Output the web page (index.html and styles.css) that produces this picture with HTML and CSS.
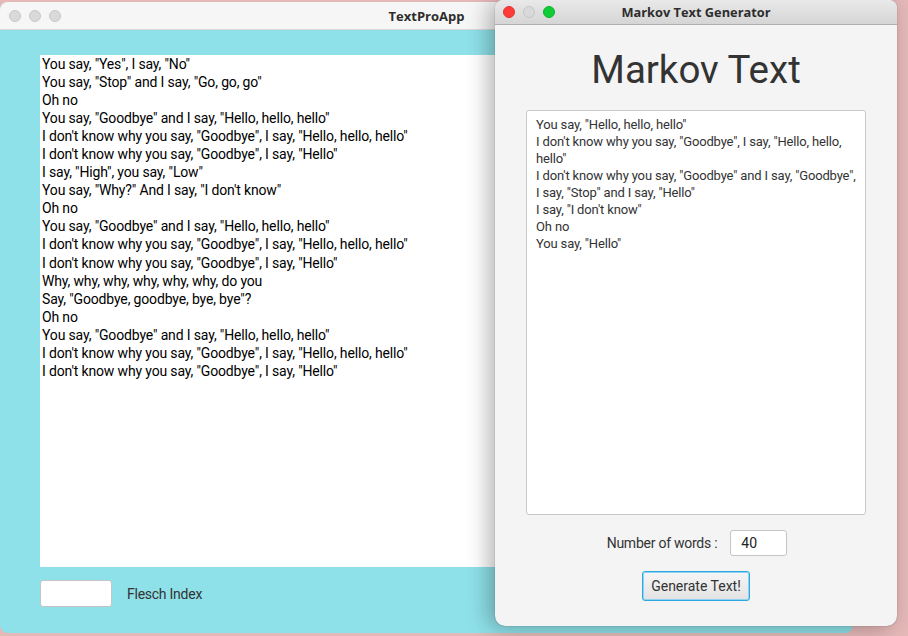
FILE: index.html
```html
<!DOCTYPE html>
<html>
<head>
<meta charset="utf-8">
<link rel="stylesheet" href="styles.css">
</head>
<body>
<div class="desktop">
  <div class="win win-main">
    <div class="titlebar titlebar-inactive">
      <div class="lights">
        <span class="light grey"></span><span class="light grey"></span><span class="light grey"></span>
      </div>
      <div class="title">TextProApp</div>
    </div>
    <div class="main-body">
      <div class="doc">
        <div>You say, "Yes", I say, "No"</div>
        <div>You say, "Stop" and I say, "Go, go, go"</div>
        <div>Oh no</div>
        <div>You say, "Goodbye" and I say, "Hello, hello, hello"</div>
        <div>I don't know why you say, "Goodbye", I say, "Hello, hello, hello"</div>
        <div>I don't know why you say, "Goodbye", I say, "Hello"</div>
        <div>I say, "High", you say, "Low"</div>
        <div>You say, "Why?" And I say, "I don't know"</div>
        <div>Oh no</div>
        <div>You say, "Goodbye" and I say, "Hello, hello, hello"</div>
        <div>I don't know why you say, "Goodbye", I say, "Hello, hello, hello"</div>
        <div>I don't know why you say, "Goodbye", I say, "Hello"</div>
        <div>Why, why, why, why, why, why, do you</div>
        <div>Say, "Goodbye, goodbye, bye, bye"?</div>
        <div>Oh no</div>
        <div>You say, "Goodbye" and I say, "Hello, hello, hello"</div>
        <div>I don't know why you say, "Goodbye", I say, "Hello, hello, hello"</div>
        <div>I don't know why you say, "Goodbye", I say, "Hello"</div>
      </div>
      <div class="bottom-row">
        <div class="field field-flesch"></div>
        <span class="label">Flesch Index</span>
      </div>
    </div>
  </div>

  <div class="win win-markov">
    <div class="titlebar titlebar-active">
      <div class="lights">
        <span class="light red"></span><span class="light grey"></span><span class="light green"></span>
      </div>
      <div class="title">Markov Text Generator</div>
    </div>
    <div class="markov-body">
      <h1 class="heading">Markov Text</h1>
      <div class="gen-text">
        <div>You say, "Hello, hello, hello"</div>
        <div>I don't know why you say, "Goodbye", I say, "Hello, hello, hello"</div>
        <div>I don't know why you say, "Goodbye" and I say, "Goodbye", I say, "Stop" and I say, "Hello"</div>
        <div>I say, "I don't know"</div>
        <div>Oh no</div>
        <div>You say, "Hello"</div>
      </div>
      <div class="words-row">
        <span class="label">Number of words :</span>
        <div class="field field-words">40</div>
      </div>
      <button class="btn">Generate Text!</button>
    </div>
  </div>
</div>
</body>
</html>
```
FILE: styles.css
```css
html, body {
  margin: 0;
  padding: 0;
}
body {
  width: 908px;
  height: 636px;
  overflow: hidden;
  background: #e6b9b9;
  font-family: "Roboto", "Liberation Sans", sans-serif;
}
.desktop {
  position: relative;
  width: 908px;
  height: 636px;
}
.win {
  position: absolute;
  overflow: hidden;
  display: flex;
  flex-direction: column;
}
.win-main {
  left: 0;
  top: 2px;
  width: 853px;
  height: 631px;
  border-radius: 8px;
  background: #8fe1e9;
}
.win-markov {
  left: 495px;
  top: 0;
  width: 402px;
  height: 626px;
  border-radius: 8px 8px 10px 10px;
  background: #f4f4f4;
  box-shadow: 0 0 1px rgba(0,0,0,0.5), -6px 2px 22px rgba(0,0,0,0.3);
}
.titlebar {
  position: relative;
  flex: none;
  display: flex;
  align-items: center;
  justify-content: center;
}
.titlebar-inactive {
  height: 27px;
  background: #f6f6f6;
  border-bottom: 1px solid #d8d8d8;
}
.titlebar-active {
  height: 24px;
  background: linear-gradient(#e9e9e9, #d5d5d5);
  border-bottom: 1px solid #aeaeae;
}
.lights {
  position: absolute;
  left: 8px;
  top: 0;
  bottom: 0;
  display: flex;
  align-items: center;
  gap: 8px;
}
.titlebar-inactive .lights {
  left: 9px;
}
.light {
  width: 12px;
  height: 12px;
  border-radius: 50%;
  box-sizing: border-box;
}
.light.grey {
  background: #d9d9d9;
  border: 1px solid #c6c6c6;
}
.light.red {
  background: #fe3b3b;
  border: 1px solid #e2302f;
}
.light.green {
  background: #10cc36;
  border: 1px solid #0fb02c;
}
.title {
  font-family: "Open Sans", "Liberation Sans", sans-serif;
  font-weight: 700;
  font-size: 13px;
  color: #2d2d2d;
}
.titlebar-active .title {
  font-size: 12.8px;
}
.main-body {
  flex: 1;
  display: flex;
  flex-direction: column;
  padding: 25px 40px 0 40px;
}
.doc {
  height: 512px;
  background: #fff;
  padding: 0 2px;
  font-size: 14px;
  line-height: 18.05px;
  color: #000;
  letter-spacing: -0.15px;
}
.bottom-row {
  display: flex;
  align-items: center;
  gap: 15px;
  margin-top: 13px;
}
.field {
  box-sizing: border-box;
  background: #fff;
  border: 1px solid #c4c4c4;
  border-radius: 3px;
  height: 27px;
}
.field-flesch {
  width: 72px;
}
.label {
  font-size: 14px;
  color: #333;
  letter-spacing: -0.25px;
}
.markov-body {
  flex: 1;
  display: flex;
  flex-direction: column;
  align-items: center;
}
.heading {
  margin: 21px 0 0 0;
  font-weight: 400;
  font-size: 38.5px;
  line-height: 48px;
  color: #333;
}
.gen-text {
  box-sizing: border-box;
  margin-top: 16px;
  width: 340px;
  height: 405px;
  background: #fff;
  border: 1px solid #c8c8c8;
  border-radius: 3px;
  padding: 5px 9px;
  font-size: 13px;
  line-height: 17px;
  color: #333;
  letter-spacing: -0.15px;
}
.words-row {
  display: flex;
  align-items: center;
  gap: 13px;
  margin-top: 15px;
  padding-left: 2px;
}
.field-words {
  width: 57px;
  height: 26px;
  padding: 0 10px;
  font-size: 14px;
  line-height: 24px;
  color: #222;
}
.btn {
  margin-top: 15px;
  box-sizing: border-box;
  width: 108px;
  height: 30px;
  border: 1px solid #2ba8e0;
  box-shadow: inset 0 0 0 1px #8fd3f2;
  border-radius: 3px;
  background: linear-gradient(#f6f6f6, #e2e2e2);
  font-family: "Roboto", "Liberation Sans", sans-serif;
  font-size: 14px;
  color: #333;
  padding: 0;
}
```
